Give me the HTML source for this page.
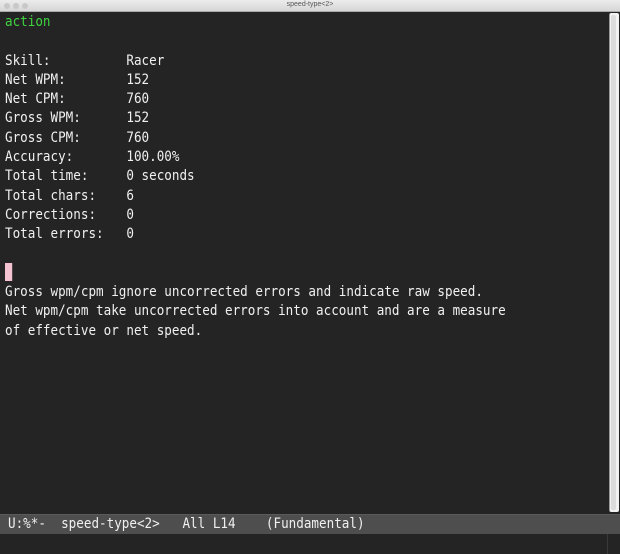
<!DOCTYPE html>
<html><head><style>
html,body{margin:0;padding:0;width:620px;height:554px;overflow:hidden;background:#242424;}
.title{position:absolute;left:0;top:0;width:620px;height:12px;background:linear-gradient(#ececec,#d6d6d6);border-bottom:1px solid #aaa;box-sizing:border-box;}
.title span{position:absolute;left:0;right:0;text-align:center;font:7px "Liberation Sans",sans-serif;color:#555;top:1px;}
.dot{position:absolute;top:3px;width:6px;height:6px;border-radius:50%;background:#c8c8c8;}
.buf{position:absolute;left:5px;top:13px;font-family:"DejaVu Sans Mono",monospace;font-size:14px;line-height:19.3px;color:#f0f0f0;white-space:pre;transform:scaleX(0.9);transform-origin:0 0;}
.g{color:#3fd13f;}
.cur{display:inline-block;width:8px;height:18px;background:#f5c2d2;vertical-align:top;margin-top:-1px;}
.sb{position:absolute;left:609px;top:13px;width:9px;height:499px;background:#f2f2f2;border-left:1px solid #999;border-radius:2px;}
.sbt{position:absolute;left:611px;top:15px;width:5px;height:495px;background:#dcdcdc;border-radius:2px;}
.ml{position:absolute;left:0;top:514px;width:620px;height:20px;background:#4e4e4e;border-top:1px solid #5a5a5a;box-sizing:border-box;}
.mlt{position:absolute;left:8px;top:515px;font-family:"DejaVu Sans Mono",monospace;font-size:14px;line-height:19px;color:#f0f0f0;white-space:pre;transform:scaleX(0.9);transform-origin:0 0;}
.vl{position:absolute;left:607px;top:534px;width:1px;height:20px;background:#3a3a3a;}
</style></head><body>
<div class="title"><div class="dot" style="left:4px"></div><div class="dot" style="left:13px"></div><div class="dot" style="left:22px"></div><span>speed-type&lt;2&gt;</span></div>
<div class="buf"><span class="g">action</span>

Skill:          Racer
Net WPM:        152
Net CPM:        760
Gross WPM:      152
Gross CPM:      760
Accuracy:       100.00%
Total time:     0 seconds
Total chars:    6
Corrections:    0
Total errors:   0

<span class="cur"></span>
Gross wpm/cpm ignore uncorrected errors and indicate raw speed.
Net wpm/cpm take uncorrected errors into account and are a measure
of effective or net speed.</div>
<div class="sb"></div><div class="sbt"></div>
<div class="ml"></div>
<div class="mlt">U:%*-  speed-type&lt;2&gt;   All L14    (Fundamental)</div>
<div class="vl"></div>
</body></html>
